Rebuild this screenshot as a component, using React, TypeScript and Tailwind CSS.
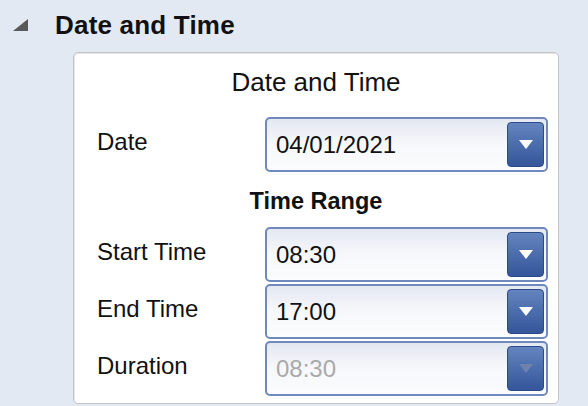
import React from 'react';

const font = { fontFamily: '"Liberation Sans", Arial, sans-serif' };

const ComboBox: React.FC<{ value: string; disabled?: boolean; className?: string }> = ({ value, disabled, className }) => (
  <div
    className={`relative flex items-center h-[55px] w-[283px] rounded-[5px] border-2 border-[#7089bd] bg-gradient-to-b from-[#e3e8f1] via-[#f7f8fb] to-[#fbfcfd] ${className ?? ''}`}
  >
    <span className={`pl-[9px] text-[24px] ${disabled ? 'text-[#a9a9a9]' : 'text-[#111]'}`}>{value}</span>
    <div className="absolute right-[2px] top-[3px] bottom-[3px] w-[37px] rounded-[4px] border border-[#2b4a86] bg-gradient-to-b from-[#6484bf] to-[#34569a] flex items-center justify-center">
      <svg width="14" height="9" viewBox="0 0 14 9">
        <polygon points="0,0 14,0 7,9" fill={disabled ? '#6d82ad' : '#ffffff'} />
      </svg>
    </div>
  </div>
);

const Label: React.FC<{ children: React.ReactNode }> = ({ children }) => (
  <span className="w-[191px] pl-[23px] pb-[6px] text-[24px] text-[#111]">{children}</span>
);

export default function App() {
  return (
    <div className="w-[588px] h-[406px] overflow-hidden bg-[#e3e9f3]" style={font}>
      {/* Group header */}
      <div className="flex items-center h-[50px]">
        <svg className="ml-[13px]" width="15" height="12" viewBox="0 0 15 12">
          <polygon points="0,12 15,12 15,0" fill="#595959" />
        </svg>
        <span className="ml-[27px] text-[26px] font-bold text-[#111] tracking-[0.2px]">Date and Time</span>
      </div>

      {/* Panel */}
      <div className="ml-[73px] mt-[2px] w-[486px] h-[352px] rounded-[5px] border border-[#c4c4c4] bg-white shadow-[inset_1px_1px_0_#e6e6e6]">
        <div className="text-center text-[26px] text-[#111] pt-[10px] h-[64px]">Date and Time</div>

        <div className="flex items-center">
          <Label>Date</Label>
          <ComboBox value="04/01/2021" />
        </div>

        <div className="text-center font-bold text-[23.5px] text-[#111] h-[55px] pt-[12px]">Time Range</div>

        <div className="flex flex-col gap-[2px]">
          <div className="flex items-center">
            <Label>Start Time</Label>
            <ComboBox value="08:30" />
          </div>
          <div className="flex items-center">
            <Label>End Time</Label>
            <ComboBox value="17:00" className="h-[53px]" />
          </div>
          <div className="flex items-center">
            <Label>Duration</Label>
            <ComboBox value="08:30" disabled className="h-[53px]" />
          </div>
        </div>
      </div>
    </div>
  );
}
